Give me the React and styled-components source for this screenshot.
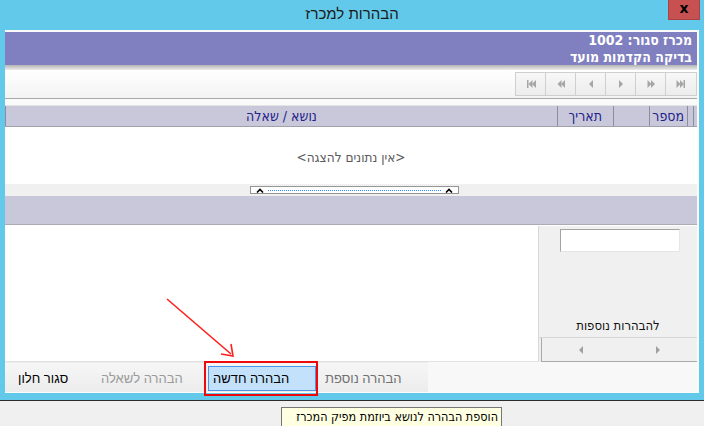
import React from "react"
import styled, { createGlobalStyle } from "styled-components"

const GlobalStyle = createGlobalStyle`
  html, body {
    margin: 0;
    padding: 0;
    background: #f0f0f0;
  }
  body {
    font-family: "Liberation Sans", "DejaVu Sans", sans-serif;
  }
`

const pixelFont = `"DejaVu Sans Condensed", "DejaVu Sans", sans-serif`

const Screen = styled.div`
  position: relative;
  width: 704px;
  height: 426px;
  overflow: hidden;
  background: #f0f0f0;
`

const Window = styled.div`
  display: flex;
  flex-direction: column;
  box-sizing: border-box;
  height: 401px;
  padding: 0 5px 7px 5px;
  background: #63c9ea;
  border-bottom: 1px solid #2b2b2b;
`

const TitleBar = styled.div`
  display: grid;
  grid-template-columns: 1fr auto 1fr;
  align-items: start;
  height: 30px;
`

const Title = styled.div`
  grid-column: 2;
  line-height: 28px;
  font-size: 15px;
  color: #1b1b1b;
  direction: rtl;
`

const CloseButton = styled.div`
  grid-column: 3;
  justify-self: end;
  margin-right: -1px;
  width: 32px;
  height: 20px;
  box-sizing: border-box;
  border: 1px solid #a84343;
  border-top: none;
  background: #c75050;
  color: #000;
  font: bold 14px "DejaVu Sans", sans-serif;
  line-height: 17px;
  text-align: center;
`

const Client = styled.div`
  display: flex;
  flex-direction: column;
  height: 363px;
  padding: 2px 2px 0 0;
  box-sizing: border-box;
  background: #fbfbfb;
`

const Banner = styled.div`
  height: 33px;
  padding: 0 5px 0 0;
  box-sizing: border-box;
  background: #8080c0;
  color: #fff;
  font: bold 14px ${pixelFont};
  line-height: 17px;
  direction: rtl;
`

const BannerShadow = styled.div`
  height: 5px;
  background: linear-gradient(#b4b4b4, #ececec);
`

const Toolbar = styled.div`
  display: flex;
  justify-content: flex-end;
  align-items: flex-start;
  height: 29px;
  padding-top: 2px;
  box-sizing: border-box;
  background: linear-gradient(#ffffff, #f3f3f3);
  border-bottom: 1px solid #a8a8a8;
`

const NavButton = styled.div`
  display: flex;
  align-items: center;
  justify-content: center;
  width: ${(p) => p.$w || 31}px;
  height: 24px;
  box-sizing: border-box;
  border: 1px solid #cfcfcf;
  margin-left: -1px;
  background: linear-gradient(#f7f7f7, #ececec);
  svg {
    fill: #a6a6a6;
  }
`

const GridGap = styled.div`
  height: 6px;
  background: #fafafa;
  border-bottom: 1px solid #e4e4e4;
`

const GridHeader = styled.div`
  display: grid;
  grid-template-columns: 4px 6px 38px 36px 56px 1fr;
  direction: rtl;
  height: 21px;
  box-sizing: border-box;
  background: #c9c8da;
  border-bottom: 1px solid #a0a0a8;
`

const HeaderCell = styled.div`
  display: flex;
  align-items: center;
  justify-content: ${(p) => (p.$center ? "center" : "flex-start")};
  padding-right: ${(p) => p.$pad || 0}px;
  border-left: 1px solid #8c8ca0;
  color: #22228a;
  font: 14px ${pixelFont};
  white-space: nowrap;
`

const GridBody = styled.div`
  display: flex;
  align-items: center;
  justify-content: center;
  height: 57px;
  padding-top: 2px;
  box-sizing: border-box;
  background: #fff;
  color: #5a5a5a;
  font: 13.5px ${pixelFont};
  direction: rtl;
`

const Splitter = styled.div`
  display: flex;
  justify-content: center;
  align-items: flex-start;
  height: 12px;
  padding-top: 2px;
  box-sizing: border-box;
  background: #f0f0f0;
`

const Grip = styled.div`
  display: flex;
  align-items: center;
  gap: 4px;
  width: 209px;
  height: 8px;
  margin-left: 6px;
  padding: 0 5px;
  box-sizing: border-box;
  border: 1px solid #959595;
  background: #fff;
`

const Dots = styled.div`
  flex: 1;
  border-top: 1px dotted #2f8cff;
`

const Band = styled.div`
  height: 28px;
  background: #c9c8da;
  border-bottom: 1px solid #ababb4;
`

const BandGap = styled.div`
  height: 1px;
  background: #fff;
`

const Lower = styled.div`
  display: flex;
  height: 136px;
`

const Notes = styled.div`
  flex: 1;
  background: #fff;
  border-right: 1px solid #d9d9d9;
  border-bottom: 1px solid #e2e2e2;
`

const SidePanel = styled.div`
  display: flex;
  flex-direction: column;
  width: 158px;
  padding-top: 3px;
  box-sizing: border-box;
  background: #f0f0f0;
`

const SearchBox = styled.div`
  align-self: center;
  width: 120px;
  height: 23px;
  margin-left: 4px;
  box-sizing: border-box;
  border: 1px solid #a3a3a3;
  border-right-color: #e6e6e6;
  border-bottom-color: #e6e6e6;
  background: #fff;
`

const SideLabel = styled.div`
  margin-top: auto;
  padding-bottom: 4px;
  text-align: center;
  color: #111;
  font: 13px ${pixelFont};
  direction: rtl;
`

const SideNav = styled.div`
  display: flex;
  height: 24px;
  padding-left: 2px;
  border-top: 1px solid #d6d6d6;
`

const SideButton = styled.div`
  flex: 1;
  display: flex;
  align-items: center;
  justify-content: center;
  background: #f0f0f0;
  border-left: ${(p) => (p.$divider ? "1px solid #a9a9a9" : "none")};
  border-bottom: 1px solid #a9a9a9;
  svg {
    fill: #a0a0a0;
  }
`

const ButtonBar = styled.div`
  display: flex;
  height: 30px;
  background: #f8f8f8;
`

const ButtonGroup = styled.div`
  display: flex;
  align-items: flex-start;
  padding-top: 3px;
  box-sizing: border-box;
  background: linear-gradient(#f6f6f6, #ececec);
  border-top: 1px solid #ececec;
`

const ActionButton = styled.div`
  display: flex;
  align-items: center;
  justify-content: flex-end;
  width: ${(p) => p.$w}px;
  height: 25px;
  margin: 0 ${(p) => p.$mr || 0}px 0 ${(p) => p.$ml || 0}px;
  padding-left: ${(p) => p.$pl || 8}px;
  box-sizing: border-box;
  font-size: 13px;
  color: ${(p) => p.$color || "#000"};
  direction: rtl;
  white-space: nowrap;
  background: ${(p) => (p.$active ? "#c4e1fb" : "transparent")};
  border: 1px solid ${(p) => (p.$active ? "#4c94e6" : "transparent")};
`

const StatusArea = styled.div`
  flex: 1;
`

const Highlight = styled.div`
  position: absolute;
  left: 204px;
  top: 361px;
  width: 114px;
  height: 35px;
  box-sizing: border-box;
  border: 2.5px solid #ee0a0a;
  pointer-events: none;
`

const Arrow = styled.svg`
  position: absolute;
  left: 0;
  top: 0;
  pointer-events: none;
`

const Tooltip = styled.div`
  position: absolute;
  left: 281px;
  top: 407px;
  width: 221px;
  height: 22px;
  box-sizing: border-box;
  padding: 1px 3px 0 0;
  border: 1px solid #767676;
  background: #ffffe1;
  color: #000;
  font: 12.5px ${pixelFont};
  direction: rtl;
  white-space: nowrap;
`

const Tri = ({ dir, x = 0 }) =>
  dir === "left" ? (
    <polygon points={`${x + 4},1 ${x},5 ${x + 4},9`} />
  ) : (
    <polygon points={`${x},1 ${x + 4},5 ${x},9`} />
  )

const NavIcon = ({ kind }) => {
  const parts = {
    first: [<rect key="b" x="1" y="1" width="1.5" height="8" />, <Tri key="a" dir="left" x={2.5} />, <Tri key="c" dir="left" x={6} />],
    prev2: [<Tri key="a" dir="left" x={1.5} />, <Tri key="c" dir="left" x={5} />],
    prev: [<Tri key="a" dir="left" x={3} />],
    next: [<Tri key="a" dir="right" x={3} />],
    next2: [<Tri key="a" dir="right" x={1.5} />, <Tri key="c" dir="right" x={5} />],
    last: [<Tri key="a" dir="right" x={0.5} />, <Tri key="c" dir="right" x={4} />, <rect key="b" x="7.5" y="1" width="1.5" height="8" />],
  }
  return (
    <svg width="10" height="10" viewBox="0 0 10 10">
      {parts[kind]}
    </svg>
  )
}

const Caret = () => (
  <svg width="8" height="5" viewBox="0 0 8 5">
    <polyline points="1,4.5 4,1.5 7,4.5" fill="none" stroke="#000" strokeWidth="1.6" />
  </svg>
)

const App = () => {
  return (
    <>
      <GlobalStyle />
      <Screen>
        <Window>
          <TitleBar>
            <Title>הבהרות למכרז</Title>
            <CloseButton>x</CloseButton>
          </TitleBar>
          <Client>
            <Banner>
              <div>מכרז סגור: 1002</div>
              <div>בדיקה הקדמות מועד</div>
            </Banner>
            <BannerShadow />
            <Toolbar>
              <NavButton><NavIcon kind="first" /></NavButton>
              <NavButton><NavIcon kind="prev2" /></NavButton>
              <NavButton><NavIcon kind="prev" /></NavButton>
              <NavButton><NavIcon kind="next" /></NavButton>
              <NavButton><NavIcon kind="next2" /></NavButton>
              <NavButton $w={32}><NavIcon kind="last" /></NavButton>
            </Toolbar>
            <GridGap />
            <GridHeader>
              <HeaderCell />
              <HeaderCell />
              <HeaderCell $pad={3}>מספר</HeaderCell>
              <HeaderCell />
              <HeaderCell $pad={11}>תאריך</HeaderCell>
              <HeaderCell $center>נושא / שאלה</HeaderCell>
            </GridHeader>
            <GridBody>{"<אין נתונים להצגה>"}</GridBody>
            <Splitter>
              <Grip>
                <Caret />
                <Dots />
                <Caret />
              </Grip>
            </Splitter>
            <Band />
            <BandGap />
            <Lower>
              <Notes />
              <SidePanel>
                <SearchBox />
                <SideLabel>להבהרות נוספות</SideLabel>
                <SideNav>
                  <SideButton $divider>
                    <svg width="8" height="10" viewBox="0 0 8 10"><Tri dir="left" x={2} /></svg>
                  </SideButton>
                  <SideButton>
                    <svg width="8" height="10" viewBox="0 0 8 10"><Tri dir="right" x={2} /></svg>
                  </SideButton>
                </SideNav>
              </SidePanel>
            </Lower>
            <ButtonBar>
              <ButtonGroup>
                <ActionButton $w={85} $pl={12}>סגור חלון</ActionButton>
                <ActionButton $w={114} $pl={10} $color="#9a9a9a">הבהרה לשאלה</ActionButton>
                <ActionButton $w={108} $pl={4} $ml={4} $mr={2} $active>הבהרה חדשה</ActionButton>
                <ActionButton $w={110} $pl={6} $color="#707070">הבהרה נוספת</ActionButton>
              </ButtonGroup>
              <StatusArea />
            </ButtonBar>
          </Client>
        </Window>
        <Highlight />
        <Arrow width="704" height="426" viewBox="0 0 704 426">
          <line x1="167" y1="299" x2="231" y2="354" stroke="#ff1e1e" strokeWidth="1.6" />
          <polyline points="221,354 233,356 231,344" fill="none" stroke="#ff1e1e" strokeWidth="1.6" />
        </Arrow>
        <Tooltip>הוספת הבהרה לנושא ביוזמת מפיק המכרז</Tooltip>
      </Screen>
    </>
  )
}

export default App
